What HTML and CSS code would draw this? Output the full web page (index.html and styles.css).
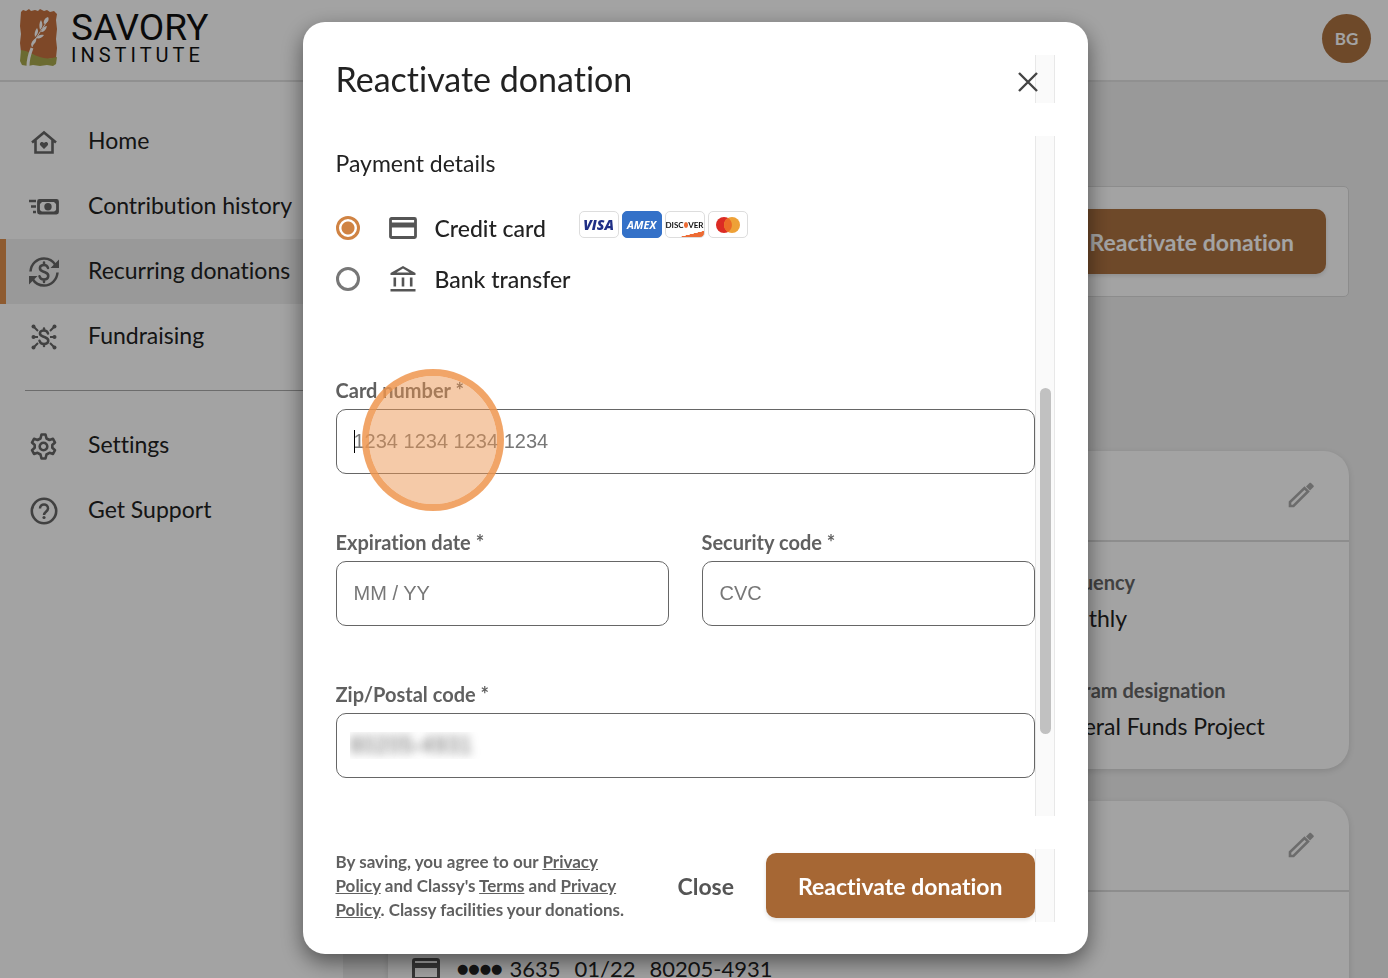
FILE: index.html
```html
<!DOCTYPE html>
<html lang="en">
<head>
    <meta charset="utf-8">
    <title>Recurring donations</title>
    <link rel="stylesheet" href="styles.css">
</head>
<body>
    <!-- Page behind the dialog -->
    <div class="page">
        <header class="topbar">
            <a href="#" class="logo">
                <svg class="logo-mark" viewBox="0 0 38 58" width="38" height="58">
                    <path fill="#c5713f" d="M1 3l2-2 3 1 3-2 2 2 4-1 3 1 2-2 4 2 3-1 3 2 4-1 3 3-1 6 1 9-1 10 1 9-1 10-16 2-19-8L0 34l1-9-1-8z"/>
                    <path fill="#a8a84e" d="M1 41c7 1 11 4 16 6 7 3 13 3 20 1l-1 7-3 2-6-1-7 1-7-1-5 1-6-1-2-4z"/>
                    <path fill="none" stroke="#fff" stroke-width="3" d="M8 57c0-8 2-13 4-18"/>
                    <path fill="none" stroke="#fff" stroke-width="1" d="M12 38c3-8 8-15 16-27"/>
                    <g fill="#fff">
                        <path d="M11 37c0-4 2-6 5-8 1 3-1 6-5 8zM15 28c-1-4 0-6 2-9 2 3 1 6-2 9zM16 29c2-3 5-4 8-3-2 3-5 4-8 3zM20 21c-1-4-1-7 1-10 2 4 2 7-1 10zM21 23c1-4 3-6 6-6-1 4-3 6-6 6zM24 15c-1-3 1-6 4-7 2 3-1 6-4 7z"/>
                    </g>
                </svg>
                <span class="logo-text">
                    <span class="logo-name">SAVORY</span>
                    <span class="logo-sub">INSTITUTE</span>
                </span>
            </a>
            <button type="button" class="avatar">BG</button>
        </header>

        <div class="layout">
            <nav class="sidebar">
                <ul>
                    <li><a href="#">
                        <svg class="icon" viewBox="0 0 30 30"><path fill="none" stroke="#666" stroke-width="2.6" d="M3 15.500L15 5.500l12 10M6.500 13v12.500h17V13"/><path fill="#666" d="M15 22l-3.500-3.400c-2-2.400 1.300-5 3.500-2.600 2.200-2.400 5.500.2 3.500 2.600z"/></svg>
                        Home</a></li>
                    <li><a href="#">
                        <svg class="icon" viewBox="0 0 30 30"><path fill="none" stroke="#666" stroke-width="2.600" d="M0 9h7M2 14.500h5M4 20h3"/><rect x="9.500" y="8.500" width="19" height="12.500" rx="1" fill="none" stroke="#666" stroke-width="2.800"/><circle cx="19" cy="14.700" r="3.700" fill="#666"/><path fill="#666" d="M10 9h4l-4 4zM28 9v4l-4-4zM10 21v-4l4 4zM28 21h-4l4-4z"/></svg>
                        Contribution history</a></li>
                    <li class="active"><a href="#">
                        <svg class="icon" viewBox="0 0 30 30"><path fill="none" stroke="#666" stroke-width="2.500" d="M1.500 14.500C2 7 8 1.500 15 1.500c5 0 9 2.500 11.500 6.500M28.500 15.500C28 23 22 28.500 15 28.500c-5 0-9-2.500-11.500-6.500"/><path fill="#666" d="M30 2.500V11h-8.500zM0 27.500V19h8.500z"/><path fill="none" stroke="#666" stroke-width="2.500" stroke-linecap="round" d="M19 11c-.5-2-2-3-4-3-5 0-5.500 5-1 6.500l2 .7c5 1.700 4 7.300-1 7.300-2.500 0-4-1.200-4.500-3.300M15 5.500V8M15 22.500V25"/></svg>
                        Recurring donations</a></li>
                    <li><a href="#">
                        <svg class="icon" viewBox="0 0 30 30"><path fill="none" stroke="#666" stroke-width="2.500" stroke-linecap="round" d="M19 11.500c-.5-2-2-3-4-3-5 0-5.500 4.500-1 6l2 .7c5 1.700 4 6.800-1 6.800-2.500 0-4-1.200-4.500-3.300M15 6.500v2M15 22v2"/><g stroke="#666" stroke-width="2"><path d="M5 5l4 4M25 5l-4 4M5 25l4-4M25 25l-4-4M4 15h5M26 15h-5"/></g><g fill="#666"><circle cx="4.500" cy="4.500" r="2"/><circle cx="25.500" cy="4.500" r="2"/><circle cx="4.500" cy="25.500" r="2"/><circle cx="25.500" cy="25.500" r="2"/><circle cx="4.500" cy="15" r="2"/><circle cx="25.500" cy="15" r="2"/></g></svg>
                        Fundraising</a></li>
                </ul>
                <hr>
                <ul>
                    <li><a href="#">
                        <svg class="icon" viewBox="-15 -15 30 30"><path fill="none" stroke="#666" stroke-width="2.600" stroke-linejoin="round" d="M-2.500-11.500H1.500L2.500-7.500 5.500-6 9-7.200 11-3.500 8.300-1V1.800L11 4.200 9 8 5.500 6.800 2.500 8.500 1.500 12.500H-2.500L-3.500 8.500-6.500 6.800-10 8-12 4.200-9.300 1.800V-1L-12-3.500-10-7.200-6.500-6-3.500-7.500z"/><circle cx="-.5" cy=".5" r="3.800" fill="none" stroke="#666" stroke-width="2.600"/></svg>
                        Settings</a></li>
                    <li><a href="#">
                        <svg class="icon" viewBox="0 0 30 30"><circle cx="15" cy="15" r="12.200" fill="none" stroke="#666" stroke-width="2.600"/><path fill="none" stroke="#666" stroke-width="2.500" d="M11 12.500c0-5.500 8-5.500 8 0 0 3-4 3.500-4 6.500"/><circle cx="15" cy="21.500" r="1.600" fill="#666"/></svg>
                        Get Support</a></li>
                </ul>
            </nav>

            <main class="content">
                <section class="notice">
                    <button type="button" class="btn btn-muted">Reactivate donation</button>
                </section>
                <section class="card card-details">
                    <div class="card-head">
                        <button type="button" class="edit" aria-label="Edit details">
                            <svg viewBox="0 0 26 26" width="26" height="26"><path fill="none" stroke="#aaa" stroke-width="2.600" d="M2 24v-4L16.500 6l3.500 3.500L5.500 24z"/><path fill="#aaa" d="M18 4.500L21.500 1c.5-.5 1-.5 1.500 0l2.500 2.500c.5.500.5 1 0 1.500L22 8.500z"/></svg>
                        </button>
                    </div>
                    <dl class="facts">
                        <div class="fact">
                            <dt>Frequency</dt>
                            <dd>Monthly</dd>
                        </div>
                        <div class="fact">
                            <dt>Program designation</dt>
                            <dd>General Funds Project</dd>
                        </div>
                    </dl>
                </section>
                <section class="card">
                    <div class="card-head">
                        <button type="button" class="edit" aria-label="Edit payment method">
                            <svg viewBox="0 0 26 26" width="26" height="26"><path fill="none" stroke="#aaa" stroke-width="2.600" d="M2 24v-4L16.500 6l3.500 3.500L5.500 24z"/><path fill="#aaa" d="M18 4.500L21.500 1c.5-.5 1-.5 1.500 0l2.500 2.500c.5.500.5 1 0 1.500L22 8.500z"/></svg>
                        </button>
                    </div>
                    <div class="saved-card">
                        <svg viewBox="0 0 28 24" width="28" height="24"><rect x="1.500" y="2.500" width="25" height="19" rx="1.500" fill="none" stroke="#555" stroke-width="3"/><path fill="#555" d="M1 6h26v5H1z"/></svg>
                        <span class="dots">●●●●</span>
                        <span>3635</span>
                        <span>01/22</span>
                        <span>80205-4931</span>
                    </div>
                </section>
            </main>
        </div>
    </div>

    <!-- Reactivate dialog -->
    <div class="backdrop">
        <form class="modal" role="dialog" aria-labelledby="modal-title">
            <div class="modal-head">
                <h1 id="modal-title">Reactivate donation</h1>
                <button type="button" class="close-x" aria-label="Close dialog">
                    <svg viewBox="0 0 20 20" width="20" height="20"><path fill="none" stroke="#444" stroke-width="2.400" d="M1 1l18 18M19 1L1 19"/></svg>
                </button>
                <div class="rail"></div>
            </div>

            <div class="modal-body">
                <div class="fields">
                    <h2>Payment details</h2>
                    <div class="method">
                        <input type="radio" name="method" id="credit" checked>
                        <label for="credit">
                            <svg viewBox="0 0 28 24" width="28" height="24"><rect x="1.500" y="2.500" width="25" height="19" rx="1" fill="none" stroke="#555" stroke-width="2.800"/><path fill="#555" d="M1 6.500h26v5H1z"/></svg>
                            Credit card
                        </label>
                        <div class="brands">
                            <span class="brand visa">VISA</span>
                            <span class="brand amex">AMEX</span>
                            <span class="brand discover">DISC<i></i>VER</span>
                            <span class="brand mastercard">
                                <svg viewBox="0 0 26 18" width="26" height="18"><circle cx="9" cy="9" r="8" fill="#dc2b24"/><circle cx="17" cy="9" r="8" fill="#eea137"/><path fill="#ec6b27" d="M13 2.100a8 8 0 0 1 0 13.800 8 8 0 0 1 0-13.800z"/></svg>
                            </span>
                        </div>
                    </div>
                    <div class="method">
                        <input type="radio" name="method" id="bank">
                        <label for="bank">
                            <svg viewBox="0 0 28 28" width="28" height="28"><path fill="#555" d="M14 1l12.500 7v2h-25V8zm0 2.600L7.500 7.500h13zM4.500 12.500h2.600v9H4.500zM12.700 12.500h2.600v9h-2.600zM20.900 12.500h2.600v9h-2.600zM1.500 24h25v2.500h-25z" fill-rule="evenodd"/></svg>
                            Bank transfer
                        </label>
                    </div>

                    <div class="grid">
                        <div class="field wide">
                            <label for="number">Card number *</label>
                            <input type="text" id="number" class="with-caret" placeholder="1234 1234 1234 1234">
                            <div class="click-marker"></div>
                        </div>
                        <div class="field">
                            <label for="expiration">Expiration date *</label>
                            <input type="text" id="expiration" placeholder="MM / YY">
                        </div>
                        <div class="field">
                            <label for="cvc">Security code *</label>
                            <input type="text" id="cvc" placeholder="CVC">
                        </div>
                        <div class="field wide">
                            <label for="zip">Zip/Postal code *</label>
                            <input type="text" id="zip" class="hidden-value" value="80205-4931">
                        </div>
                    </div>
                </div>
                <div class="rail"><div class="thumb"></div></div>
            </div>

            <div class="modal-foot">
                <p class="terms">By saving, you agree to our <a href="#">Privacy Policy</a> and Classy's <a href="#">Terms</a> and <a href="#">Privacy Policy</a>. Classy facilities your donations.</p>
                <button type="button" class="btn-text">Close</button>
                <button type="submit" class="btn">Reactivate donation</button>
                <div class="rail"></div>
            </div>
        </form>
    </div>
</body>
</html>
```

FILE: styles.css
```css
* {
    box-sizing: border-box;
    margin: 0;
    padding: 0;
}

body {
    height: 100vh;
    overflow: hidden;
    font-family: Lato, "Open Sans", sans-serif;
    font-size: 23px;
    line-height: 28px;
    font-variant-ligatures: none;
    color: #222;
    background: #efefef;
}

ul {
    list-style: none;
}

button, input {
    font-family: inherit;
    font-size: inherit;
    font-variant-ligatures: none;
}

button {
    border: none;
    background: none;
    cursor: pointer;
}

svg {
    display: block;
    flex: none;
}

/* Top bar */
.page {
    height: 100vh;
    overflow: hidden;
    display: flex;
    flex-direction: column;
}

.topbar {
    flex: none;
    height: 82px;
    padding: 0 17px 4px 20px;
    display: flex;
    align-items: center;
    justify-content: space-between;
    background: #fff;
    border-bottom: 2px solid #e2e2e2;
}

.logo {
    display: flex;
    align-items: center;
    gap: 13px;
    color: #111;
    text-decoration: none;
}

.logo-text {
    display: flex;
    flex-direction: column;
    font-family: Roboto, sans-serif;
}

.logo-name {
    font-size: 37px;
    line-height: 34px;
}

.logo-sub {
    font-size: 20px;
    line-height: 20px;
    letter-spacing: 4px;
}

.avatar {
    width: 49px;
    height: 49px;
    border-radius: 50%;
    background: #ad7241;
    color: #fff;
    font-size: 17px;
    font-weight: 700;
}

/* Sidebar */
.layout {
    flex: 1;
    min-height: 0;
    display: flex;
}

.sidebar {
    flex: none;
    width: 343px;
    padding-top: 27px;
    background: #fff;
}

.sidebar a {
    height: 65px;
    padding: 0 0 4px 23px;
    display: flex;
    align-items: center;
    gap: 29px;
    border-left: 6px solid transparent;
    color: #222;
    text-decoration: none;
}

.sidebar .active a {
    background: #efefef;
    border-left-color: #df8f4b;
}

.sidebar hr {
    margin: 21px 25px 22px;
    border: none;
    border-top: 1px solid #aaa;
}

.icon {
    width: 30px;
    height: 30px;
    margin-top: 4px;
}

/* Content */
.content {
    flex: 1;
    min-width: 0;
    padding: 104px 39px 0 45px;
}

.notice {
    display: flex;
    justify-content: flex-end;
    margin-bottom: 154px;
    padding: 22px;
    background: #fff;
    border: 1px solid #dcdcdc;
    border-radius: 5px;
}

.card {
    margin-bottom: 32px;
    background: #fff;
    border-radius: 25px;
    box-shadow: 0 2px 6px rgba(0, 0, 0, 0.12);
}

.card-details {
    height: 318px;
}

.card-head {
    height: 91px;
    padding: 0 35px 2px;
    display: flex;
    align-items: center;
    justify-content: flex-end;
    border-bottom: 2px solid #ddd;
}

.facts {
    padding: 26px 24px;
    display: grid;
    grid-template-columns: repeat(3, 1fr);
    gap: 44px 32px;
}

.fact {
    grid-column: 3;
    white-space: nowrap;
}

.fact dt {
    font-size: 20px;
    font-weight: 700;
    color: #666;
}

.fact dd {
    margin-top: 8px;
}

.saved-card {
    padding: 63px 24px;
    display: flex;
    align-items: center;
    gap: 14px;
    font-size: 22px;
}

.dots {
    margin: 0 -7px 0 3px;
    font-family: "DejaVu Sans", sans-serif;
    font-size: 13px;
}

/* Dialog */
.backdrop {
    position: fixed;
    inset: 0;
    padding: 22px 0 24px 2px;
    display: flex;
    justify-content: center;
    background: rgba(0, 0, 0, 0.36);
}

.modal {
    width: 100%;
    max-width: 785px;
    padding: 33px 33px 32px;
    display: flex;
    flex-direction: column;
    gap: 33px;
    background: #fff;
    border-radius: 22px;
    box-shadow: 0 8px 22px rgba(0, 0, 0, 0.5);
}

.modal-head, .modal-body, .modal-foot {
    display: flex;
}

.modal-head {
    height: 48px;
    align-items: center;
}

.modal-head h1 {
    flex: 1;
    font-size: 34px;
    line-height: 40px;
    font-weight: 400;
}

.close-x {
    z-index: 1;
    margin: 5px -7px 0 0;
    padding: 4px;
}

.rail {
    position: relative;
    flex: none;
    align-self: stretch;
    width: 20px;
    background: #fafafa;
    border: 1px solid #e8e8e8;
    border-width: 0 1px;
}

.thumb {
    position: absolute;
    top: 37%;
    left: 4px;
    width: 11px;
    height: 51%;
    border-radius: 6px;
    background: #c1c1c1;
}

.modal-body {
    flex: 1;
    min-height: 0;
    overflow: hidden;
}

.fields {
    flex: 1;
    padding-top: 13px;
}

.fields h2 {
    margin-bottom: 25px;
    font-size: 23px;
    font-weight: 400;
}

/* Payment methods */
.method {
    height: 51px;
    display: flex;
    align-items: center;
}

.method input {
    appearance: none;
    width: 24px;
    height: 24px;
    border: 3px solid #777;
    border-radius: 50%;
}

.method input:checked {
    border-color: #d08343;
    background: radial-gradient(circle, #d08343 6px, #fff 7px);
}

.method label {
    width: 190px;
    margin-left: 29px;
    display: flex;
    align-items: center;
    gap: 18px;
    font-weight: 500;
}

.brands {
    display: flex;
    gap: 3px;
    padding-bottom: 6px;
}

.brand {
    width: 40px;
    height: 27px;
    display: flex;
    align-items: center;
    justify-content: center;
    overflow: hidden;
    border: 1px solid #ddd;
    border-radius: 5px;
    font-family: "Open Sans", sans-serif;
    line-height: 14px;
}

.visa {
    font-size: 14px;
    font-weight: 800;
    font-style: italic;
    color: #1f2f86;
}

.amex {
    background: #3471c8;
    border-color: #3471c8;
    font-size: 11px;
    font-weight: 700;
    font-style: italic;
    color: #fff;
}

.discover {
    background: linear-gradient(166deg, transparent 82%, #ed6b34 83%);
    font-family: Lato, sans-serif;
    font-size: 8px;
    font-weight: 700;
    color: #111;
}

.discover i {
    width: 6px;
    height: 6px;
    border-radius: 50%;
    background: #ed6b34;
}

/* Card form */
.grid {
    margin-top: 74px;
    display: grid;
    grid-template-columns: 1fr 1fr;
    gap: 56px 33px;
}

.wide {
    grid-column: 1 / 3;
}

.field {
    position: relative;
}

.field label {
    display: block;
    margin-bottom: 7px;
    font-size: 20px;
    line-height: 24px;
    font-weight: 700;
    color: #606060;
}

.field input {
    display: block;
    width: 100%;
    height: 65px;
    padding: 0 17px;
    border: 1px solid #666;
    border-radius: 10px;
    font-family: "Liberation Sans", sans-serif;
    font-size: 20px;
    color: #222;
}

.field input::placeholder {
    color: #777;
}

.field .with-caret {
    background: linear-gradient(#000, #000) 17px center / 1px 23px no-repeat;
}

.field .hidden-value {
    padding: 0 13px;
    font-size: 23px;
    color: transparent;
    text-shadow: 0 0 10px #666;
}

.click-marker {
    position: absolute;
    top: -9px;
    left: 26px;
    width: 142px;
    height: 142px;
    border: 7px solid rgba(239, 149, 78, 0.85);
    border-radius: 50%;
    background: rgba(236, 150, 82, 0.5);
    background-clip: padding-box;
    pointer-events: none;
}

/* Footer */
.modal-foot {
    height: 73px;
    align-items: center;
}

.terms {
    width: 300px;
    margin-right: auto;
    font-size: 17px;
    line-height: 24px;
    font-weight: 700;
    color: #606060;
}

.terms a {
    color: inherit;
}

.btn, .btn-text {
    height: 65px;
    padding: 0 32px;
    font-weight: 700;
    white-space: nowrap;
}

.btn {
    background: #a66734;
    border-radius: 10px;
    box-shadow: 0 2px 4px rgba(0, 0, 0, 0.12);
    color: #fff;
}

.btn-muted {
    background: #ad7241;
}

.btn-text {
    color: #555;
}
```
